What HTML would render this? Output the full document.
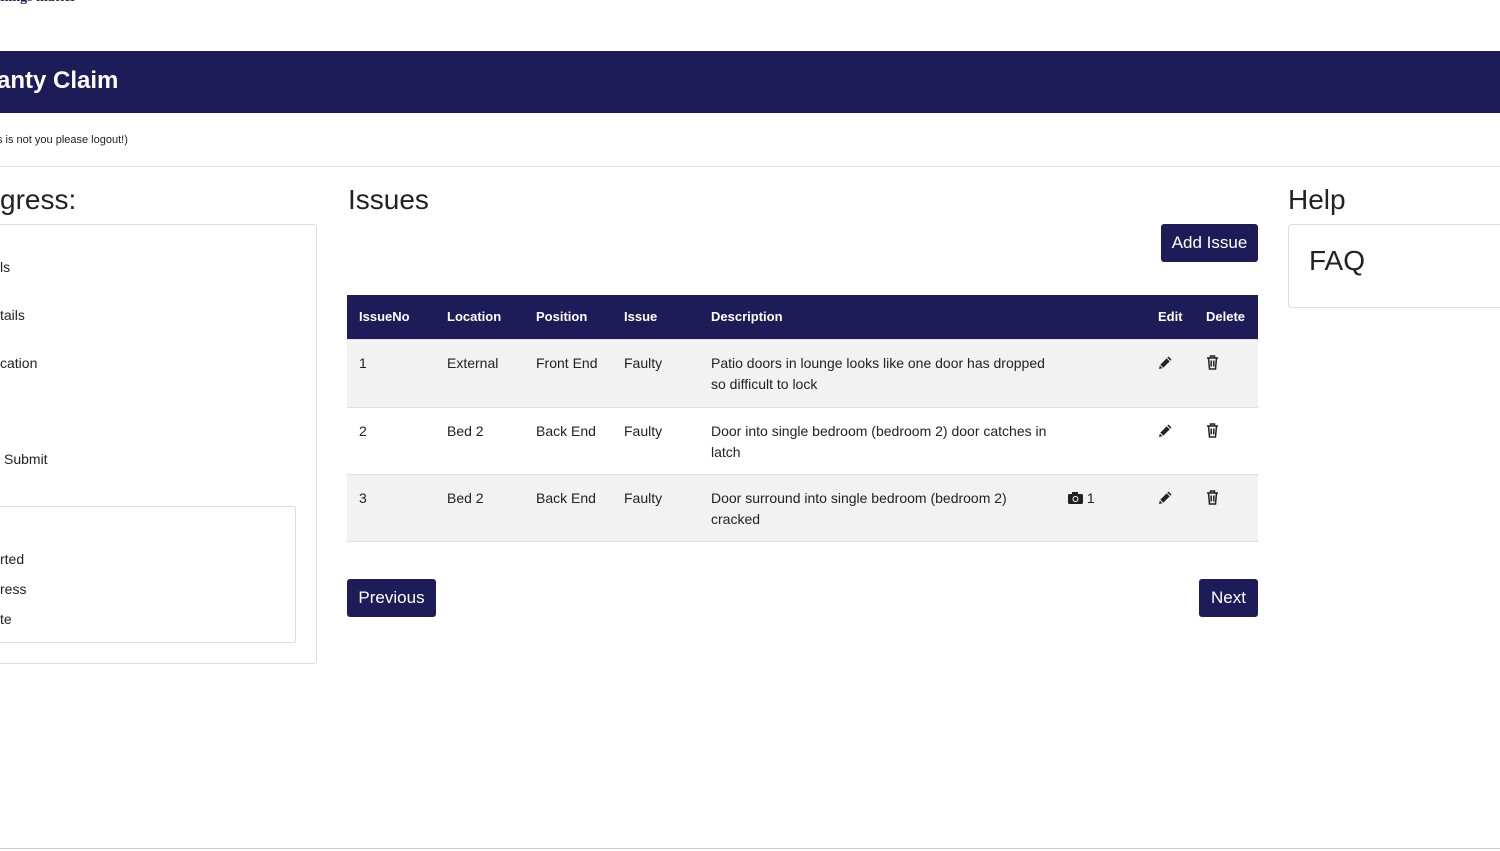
<!DOCTYPE html>
<html><head><meta charset="utf-8"><style>
*{margin:0;padding:0;box-sizing:border-box}
body{width:1500px;height:851px;position:relative;overflow:hidden;background:#fff;font-family:"Liberation Sans",Arial,sans-serif;color:#222}
.a{position:absolute;white-space:nowrap}
.bar{position:absolute;left:0;top:51px;width:1500px;height:62px;background:#1e1c58}
.btn{position:absolute;background:#1e1c58;color:#fff;border-radius:3px;font-size:17px;text-align:center;line-height:38px;height:38px}
table{position:absolute;left:347px;top:295px;width:911px;border-collapse:collapse;font-size:14px}
th{background:#1e1c58;color:#fff;text-align:left;height:44px;font-weight:bold;font-size:13px;padding-left:12px}
td{vertical-align:top;padding:13px 0 0 12px;line-height:21px;border-top:1px solid #dedee3}
tr.g td{background:#f2f2f2}
svg{vertical-align:-2px}
</style></head><body>
<div class="a" style="left:-4px;top:-10px;font-family:'Liberation Serif',serif;font-weight:bold;font-size:14px;color:#1e1c58">things matter</div>
<div class="bar"></div>
<div class="a" style="left:-3px;top:67px;color:#fff;font-weight:bold;font-size:24px">anty Claim</div>
<div class="a" style="left:-3px;top:134px;font-size:11px">s is not you please logout!)</div>
<div class="a" style="left:0;top:166px;width:1500px;height:1px;background:#e2e2e2"></div>
<div class="a" style="left:0;top:184px;font-size:28px">gress:</div>
<div class="a" style="left:-10px;top:224px;width:327px;height:440px;border:1px solid #ddd;border-radius:3px"></div>
<div class="a" style="left:0;top:259px;font-size:14px">ls</div>
<div class="a" style="left:0;top:307px;font-size:14px">tails</div>
<div class="a" style="left:0;top:355px;font-size:14px">cation</div>
<div class="a" style="left:4px;top:451px;font-size:14px">Submit</div>
<div class="a" style="left:-10px;top:506px;width:306px;height:137px;border:1px solid #ddd;border-radius:2px"></div>
<div class="a" style="left:0;top:551px;font-size:14px">rted</div>
<div class="a" style="left:0;top:581px;font-size:14px">ress</div>
<div class="a" style="left:0;top:611px;font-size:14px">te</div>
<div class="a" style="left:348px;top:184px;font-size:28px">Issues</div>
<div class="btn" style="left:1161px;top:224px;width:97px">Add Issue</div>
<table>
<tr><th style="width:88px">IssueNo</th><th style="width:89px">Location</th><th style="width:88px">Position</th><th style="width:87px">Issue</th><th style="width:352px">Description</th><th style="width:95px"></th><th style="width:48px">Edit</th><th>Delete</th></tr>
<tr class="g" style="height:68px"><td>1</td><td>External</td><td>Front End</td><td>Faulty</td><td>Patio doors in lounge looks like one door has dropped<br>so difficult to lock</td><td></td><td><svg class="e" width="15" height="15" viewBox="0 0 15 15"><path d="M1 14 L2 10 L10.5 1.5 L13.5 4.5 L5 13 Z" fill="#222"/><path d="M2 10 L5 13" stroke="#f2f2f2" stroke-width="1"/><path d="M9 3 L12 6" stroke="#f2f2f2" stroke-width="1"/></svg></td><td><svg width="13" height="15" viewBox="0 0 13 15"><path d="M1 3h11M4.5 3V1h4v2M2.5 3l1 11h6l1-11M5.2 5.5v6M7.8 5.5v6" fill="none" stroke="#222" stroke-width="1.5"/></svg></td></tr>
<tr style="height:67px"><td>2</td><td>Bed 2</td><td>Back End</td><td>Faulty</td><td>Door into single bedroom (bedroom 2) door catches in<br>latch</td><td></td><td><svg width="15" height="15" viewBox="0 0 15 15"><path d="M1 14 L2 10 L10.5 1.5 L13.5 4.5 L5 13 Z" fill="#222"/><path d="M2 10 L5 13" stroke="#fff" stroke-width="1"/><path d="M9 3 L12 6" stroke="#fff" stroke-width="1"/></svg></td><td><svg width="13" height="15" viewBox="0 0 13 15"><path d="M1 3h11M4.5 3V1h4v2M2.5 3l1 11h6l1-11M5.2 5.5v6M7.8 5.5v6" fill="none" stroke="#222" stroke-width="1.5"/></svg></td></tr>
<tr class="g" style="height:67px"><td>3</td><td>Bed 2</td><td>Back End</td><td>Faulty</td><td>Door surround into single bedroom (bedroom 2)<br>cracked</td><td style="padding-left:17px"><svg width="15" height="12" viewBox="0 0 15 12" style="vertical-align:-1px"><rect x="0" y="2" width="15" height="10" rx="1.5" fill="#222"/><rect x="4" y="0" width="6" height="3" fill="#222"/><circle cx="7.5" cy="7" r="3" fill="#fff"/><circle cx="7.5" cy="7" r="2" fill="#222"/></svg> 1</td><td><svg width="15" height="15" viewBox="0 0 15 15"><path d="M1 14 L2 10 L10.5 1.5 L13.5 4.5 L5 13 Z" fill="#222"/><path d="M2 10 L5 13" stroke="#f2f2f2" stroke-width="1"/><path d="M9 3 L12 6" stroke="#f2f2f2" stroke-width="1"/></svg></td><td><svg width="13" height="15" viewBox="0 0 13 15"><path d="M1 3h11M4.5 3V1h4v2M2.5 3l1 11h6l1-11M5.2 5.5v6M7.8 5.5v6" fill="none" stroke="#222" stroke-width="1.5"/></svg></td></tr>
</table>
<div class="a" style="left:347px;top:541px;width:911px;height:1px;background:#dedee3"></div>
<div class="btn" style="left:347px;top:579px;width:89px">Previous</div>
<div class="btn" style="left:1199px;top:579px;width:59px">Next</div>
<div class="a" style="left:1288px;top:184px;font-size:28px">Help</div>
<div class="a" style="left:1288px;top:224px;width:230px;height:84px;border:1px solid #ddd;border-radius:3px"></div>
<div class="a" style="left:1309px;top:245px;font-size:28px">FAQ</div>
<div class="a" style="left:0;top:848px;width:1500px;height:1px;background:#ccc"></div>
</body></html>
